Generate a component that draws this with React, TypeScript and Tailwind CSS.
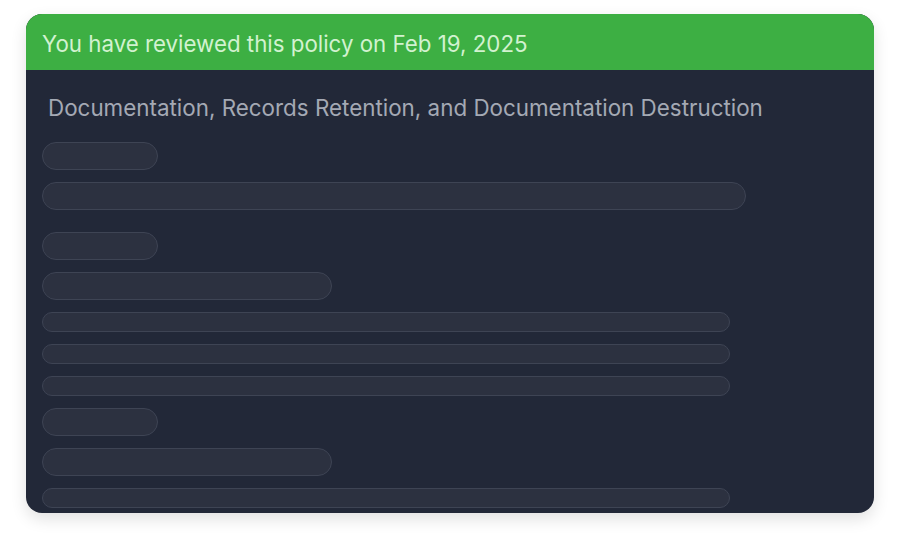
import React from "react";

function Bar({ w, h }: { w: string; h: string }) {
  return (
    <div
      className={`${w} ${h} shrink-0 rounded-full border border-[#3e4454] bg-[#2c3140]`}
    />
  );
}

export default function App() {
  return (
    <div className="w-[898px] h-[550px] bg-white pt-[14px] pl-[26px]" style={{ fontFamily: "Inter, 'Noto Sans', sans-serif" }}>
      <div className="w-[848px] h-[499px] rounded-[16px] overflow-hidden bg-[#222838] shadow-[0_6px_16px_rgba(0,0,0,0.12)] flex flex-col">
        <div className="h-[56px] bg-[#3daf43] flex items-center pl-[16px] pt-[4px] text-[22.3px] leading-[28px] text-[#d2f2d0] shrink-0">
          You have reviewed this policy on Feb 19, 2025
        </div>
        <div className="flex flex-col pl-[16px] pt-[24px]">
          <div className="pl-[6px] text-[22.4px] leading-[28px] text-[#a4a9b4]">
            Documentation, Records Retention, and Documentation Destruction
          </div>
          <div className="flex flex-col mt-[20px]">
            <Bar w="w-[116px]" h="h-[28px]" />
            <div className="h-[12px]" />
            <Bar w="w-[704px]" h="h-[28px]" />
            <div className="h-[22px]" />
            <Bar w="w-[116px]" h="h-[28px]" />
            <div className="h-[12px]" />
            <Bar w="w-[290px]" h="h-[28px]" />
            <div className="h-[12px]" />
            <Bar w="w-[688px]" h="h-[20px]" />
            <div className="h-[12px]" />
            <Bar w="w-[688px]" h="h-[20px]" />
            <div className="h-[12px]" />
            <Bar w="w-[688px]" h="h-[20px]" />
            <div className="h-[12px]" />
            <Bar w="w-[116px]" h="h-[28px]" />
            <div className="h-[12px]" />
            <Bar w="w-[290px]" h="h-[28px]" />
            <div className="h-[12px]" />
            <Bar w="w-[688px]" h="h-[20px]" />
          </div>
        </div>
      </div>
    </div>
  );
}
